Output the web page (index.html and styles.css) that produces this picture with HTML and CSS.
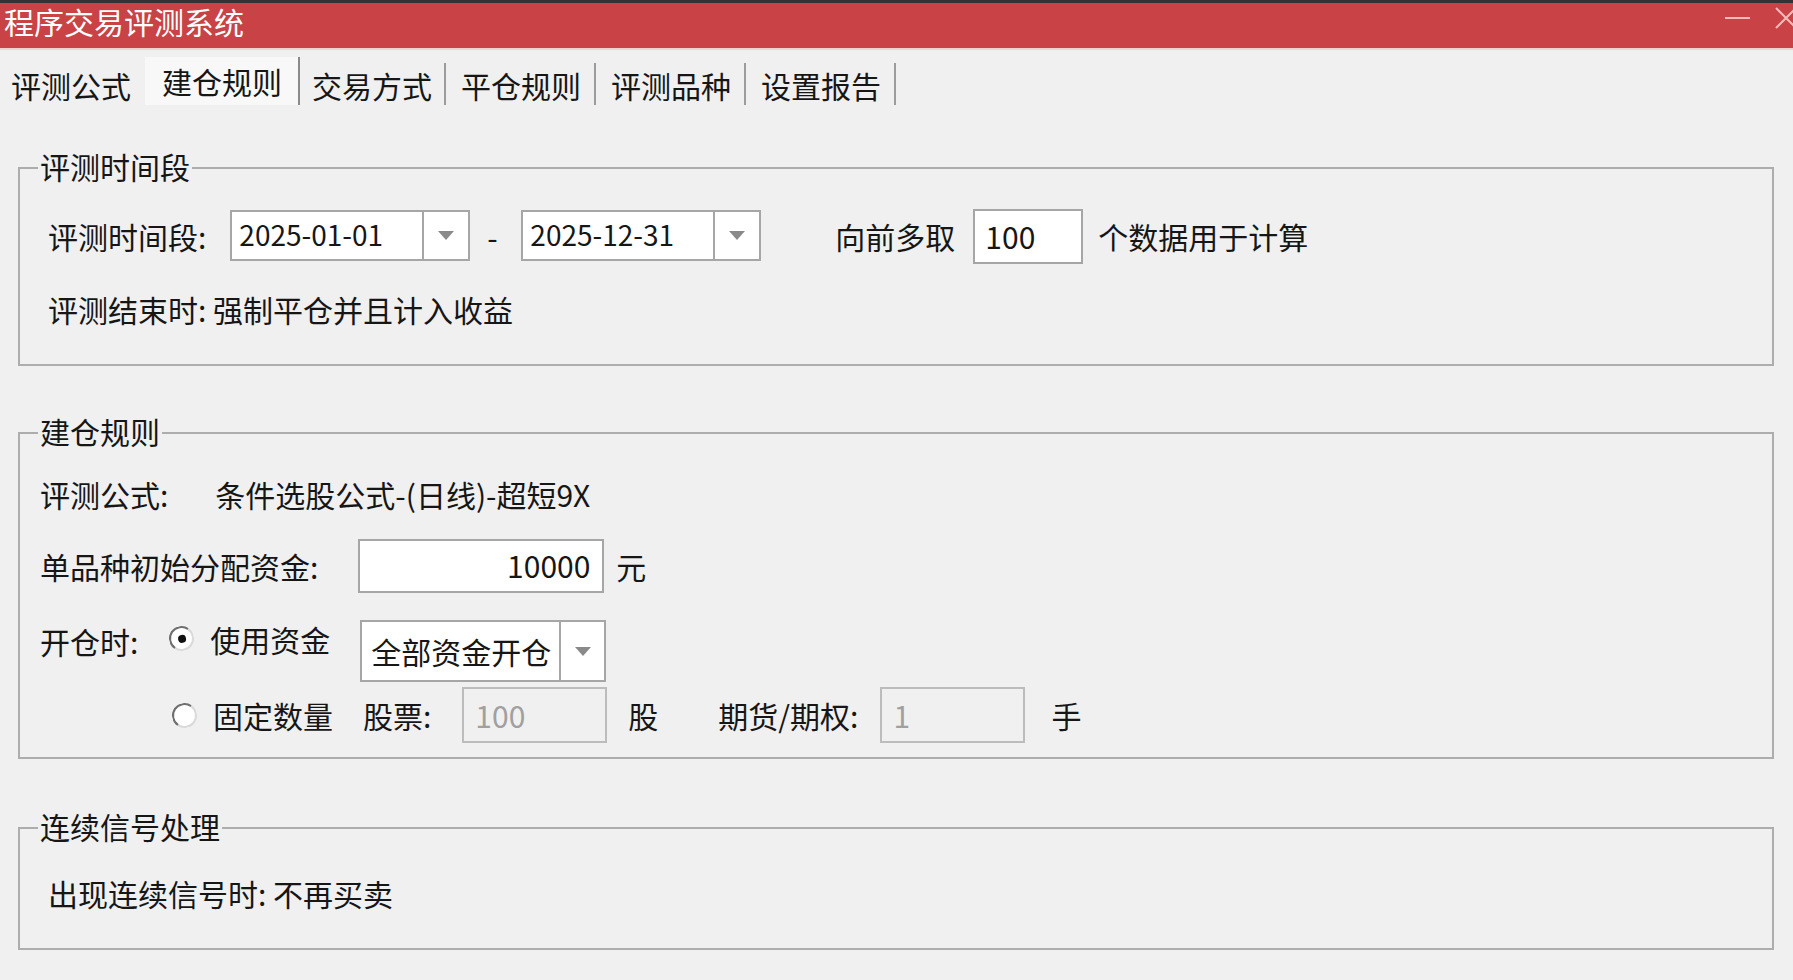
FILE: index.html
```html
<!DOCTYPE html>
<html lang="zh-CN">
<head>
    <meta charset="UTF-8">
    <title>程序交易评测系统</title>
    <link rel="stylesheet" href="styles.css">
</head>
<body>
    <div class="window">
        <div class="titlebar">
            <span class="title">程序交易评测系统</span>
            <div class="win-btns">
                <span class="btn-min"></span>
                <svg class="btn-close" width="22" height="22" viewBox="0 0 22 22">
                    <path d="M1 1 L21 21 M21 1 L1 21" stroke="#f6b8b8" stroke-width="2" fill="none"/>
                </svg>
            </div>
        </div>

        <div class="tabs">
            <div class="tab first">评测公式</div>
            <div class="tab active">建仓规则</div>
            <div class="tab">交易方式</div>
            <div class="tab">平仓规则</div>
            <div class="tab">评测品种</div>
            <div class="tab">设置报告</div>
        </div>

        <fieldset class="group group-time">
            <legend>评测时间段</legend>
            <div class="group-body">
                <div class="row row-dates">
                    <span class="label">评测时间段:</span>
                    <div class="combo date from">
                        <span class="combo-text">2025-01-01</span>
                        <span class="combo-btn"><svg width="16" height="9" viewBox="0 0 16 9"><polygon points="0,0 16,0 8,9" fill="#8a8a8a"/></svg></span>
                    </div>
                    <span class="dash">-</span>
                    <div class="combo date">
                        <span class="combo-text">2025-12-31</span>
                        <span class="combo-btn"><svg width="16" height="9" viewBox="0 0 16 9"><polygon points="0,0 16,0 8,9" fill="#8a8a8a"/></svg></span>
                    </div>
                    <span class="label pre">向前多取</span>
                    <div class="field count">100</div>
                    <span class="label post">个数据用于计算</span>
                </div>
                <div class="row row-text end-note">评测结束时: 强制平仓并且计入收益</div>
            </div>
        </fieldset>

        <fieldset class="group group-open">
            <legend>建仓规则</legend>
            <div class="group-body">
                <div class="row row-text">
                    <span class="label">评测公式:</span>
                    <span class="formula">条件选股公式-(日线)-超短9X</span>
                </div>
                <div class="row row-money">
                    <span class="label">单品种初始分配资金:</span>
                    <div class="field money">10000</div>
                    <span class="unit">元</span>
                </div>
                <div class="row row-mode">
                    <span class="label">开仓时:</span>
                    <span class="radio checked"></span>
                    <span class="radio-text">使用资金</span>
                    <div class="combo mode">
                        <span class="combo-text">全部资金开仓</span>
                        <span class="combo-btn"><svg width="16" height="9" viewBox="0 0 16 9"><polygon points="0,0 16,0 8,9" fill="#8a8a8a"/></svg></span>
                    </div>
                </div>
                <div class="row row-fixed">
                    <span class="radio"></span>
                    <span class="radio-text">固定数量</span>
                    <span class="label stock">股票:</span>
                    <div class="field disabled">100</div>
                    <span class="unit">股</span>
                    <span class="label futures">期货/期权:</span>
                    <div class="field disabled">1</div>
                    <span class="unit hand">手</span>
                </div>
            </div>
        </fieldset>

        <fieldset class="group group-signal">
            <legend>连续信号处理</legend>
            <div class="group-body">
                <div class="row row-text">出现连续信号时: 不再买卖</div>
            </div>
        </fieldset>
    </div>
</body>
</html>
```

FILE: styles.css
```css
body {
    margin: 0;
    background-color: #f0f0f0;
    font-family: "Noto Sans CJK SC", "Noto Sans", sans-serif;
    font-size: 30px;
    color: #161616;
}

.window {
    width: 1793px;
    height: 980px;
    overflow: hidden;
}

/* title bar */
.titlebar {
    display: flex;
    align-items: flex-start;
    height: 45px;
    border-top: 3px solid #333;
    border-bottom: 2px solid #f3cfcf;
    background-color: #c84246;
    overflow: hidden;
}

.title {
    padding-left: 4px;
    line-height: 37px;
    color: #fff;
}

.win-btns {
    display: flex;
    align-items: flex-start;
    margin-left: auto;
}

.btn-min {
    width: 25px;
    height: 2px;
    margin-top: 14px;
    margin-right: 25px;
    background-color: #f6b8b8;
}

.btn-close {
    flex-shrink: 0;
    margin-top: 4px;
    margin-right: -4px;
}

/* tabs */
.tabs {
    display: flex;
    align-items: flex-start;
    height: 48px;
    margin-top: 7px;
}

.tab {
    height: 42px;
    margin-top: 6px;
    padding: 3px 13px 0 15px;
    line-height: 38px;
    border-right: 2px solid #9c9c9c;
    box-sizing: border-box;
    white-space: nowrap;
}

.tab.first {
    padding-left: 11px;
    padding-right: 14px;
    border-right: none;
}

.tab.active {
    height: 48px;
    margin-top: 0;
    padding: 2px 16px 0 17px;
    line-height: 44px;
    background-color: #f8f8f8;
    border-right: 2px solid #8a8a8a;
}

.tab.active + .tab {
    padding-left: 12px;
    padding-right: 12px;
}

/* group boxes */
.group {
    margin: 0 19px 0 18px;
    padding: 0;
    border: 2px solid #adadad;
    min-width: 0;
}

.group legend {
    margin-left: 18px;
    padding: 0 2px 4px;
    line-height: 36px;
}

.group-time {
    margin-top: 43px;
}

.group-open {
    margin-top: 47px;
}

.group-signal {
    margin-top: 49px;
}

.group-body {
    padding: 0 0 0 28px;
}

.row {
    display: flex;
    align-items: center;
    white-space: nowrap;
}

.row-text {
    height: 40px;
    padding-bottom: 4px;
    line-height: 36px;
    box-sizing: border-box;
}

/* first group */
.group-time .group-body {
    padding-top: 22px;
    padding-bottom: 33px;
}

.row-dates {
    height: 52px;
}

.dash {
    display: flex;
    justify-content: center;
    width: 20px;
    margin: 0 19px 0 12px;
}

.combo {
    display: flex;
    align-items: stretch;
    background-color: #fff;
    border: 2px solid #a6a6a6;
    box-sizing: border-box;
}

.combo-text {
    flex: 1;
    padding-left: 7px;
}

.combo-btn {
    display: flex;
    align-items: center;
    justify-content: center;
    border-left: 2px solid #a6a6a6;
}

.combo.date {
    width: 240px;
    height: 51px;
    margin-top: -2px;
    font-size: 28px;
    line-height: 44px;
}

.combo.date.from {
    margin-left: 24px;
}

.combo.date .combo-btn {
    width: 44px;
}

.label.pre {
    margin-left: 74px;
}

.field {
    background-color: #fff;
    border: 2px solid #a6a6a6;
    box-sizing: border-box;
}

.field.count {
    width: 110px;
    height: 55px;
    margin-left: 18px;
    padding-left: 10px;
    line-height: 51px;
}

.label.post {
    margin-left: 15px;
}

.end-note {
    margin-top: 29px;
}

/* second group */
.group-open .group-body {
    padding: 23px 0 14px 20px;
}

.formula {
    margin-left: 47px;
}

.row-money {
    height: 54px;
    margin-top: 23px;
}

.field.money {
    width: 246px;
    height: 54px;
    margin-left: 40px;
    padding-right: 12px;
    line-height: 48px;
    text-align: right;
}

.unit {
    margin-left: 12px;
}

.row-mode {
    align-items: flex-start;
    height: 62px;
    margin-top: 27px;
}

.row-mode .label,
.row-mode .radio-text {
    line-height: 40px;
}

.row-mode .label {
    margin-top: 1px;
}

.row-mode .radio-text {
    margin-top: -1px;
}

.radio {
    position: relative;
    flex-shrink: 0;
    width: 25px;
    height: 25px;
    border: 2px solid #dadada;
    border-top-color: #6e6e6e;
    border-left-color: #6e6e6e;
    border-radius: 50%;
    background-color: #fff;
    box-sizing: border-box;
    transform: rotate(-10deg);
}

.row-mode .radio {
    margin-top: 6px;
    margin-left: 31px;
}

.radio.checked::after {
    content: "";
    position: absolute;
    left: 6.5px;
    top: 6.5px;
    width: 8px;
    height: 8px;
    border-radius: 50%;
    background-color: #111;
}

.radio-text {
    margin-left: 16px;
}

.combo.mode {
    width: 246px;
    height: 62px;
    margin-left: 30px;
    line-height: 58px;
}

.combo.mode .combo-text {
    padding-left: 9px;
}

.combo.mode .combo-btn {
    width: 43px;
}

.row-fixed {
    height: 56px;
    margin-top: 5px;
    padding-left: 132px;
}

.row-fixed > .radio-text,
.row-fixed > .label,
.row-fixed > .unit {
    line-height: 40px;
}

.label.stock {
    margin-left: 30px;
}

.field.disabled {
    width: 145px;
    height: 56px;
    padding-left: 11px;
    line-height: 52px;
    color: #a0a0a0;
    background-color: #f0f0f0;
    border-color: #bcbcbc;
}

.row-fixed .label.stock + .field {
    margin-left: 31px;
}

.row-fixed .unit {
    margin-left: 21px;
}

.label.futures {
    margin-left: 60px;
}

.label.futures + .field {
    margin-left: 22px;
}

.row-fixed .unit.hand {
    margin-left: 26px;
}

/* third group */
.group-signal .group-body {
    padding: 27px 0 33px 28px;
}
```
